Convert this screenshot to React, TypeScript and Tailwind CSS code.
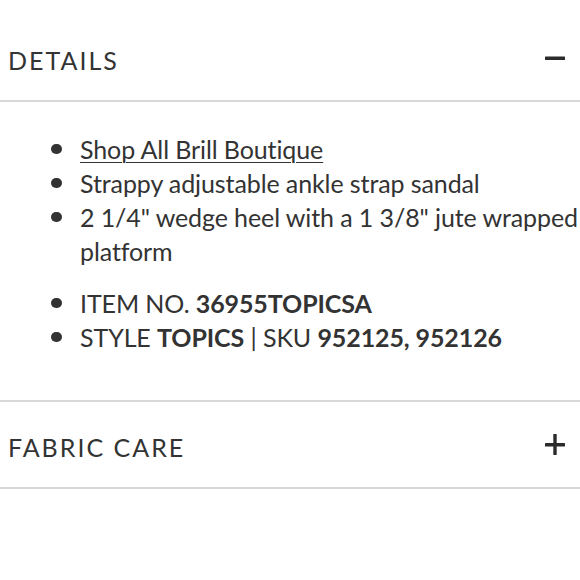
import React from 'react';

const Minus = () => (
  <svg width="20" height="20" viewBox="0 0 20 20" className="text-[#2b2b2b]">
    <rect x="0" y="8.5" width="20" height="3.4" rx="0.5" fill="currentColor" />
  </svg>
);

const Plus = () => (
  <svg width="20" height="21" viewBox="0 0 20 21" className="text-[#2b2b2b]">
    <rect x="0" y="9" width="20" height="3.4" rx="0.5" fill="currentColor" />
    <rect x="8.3" y="0" width="3.4" height="21" rx="0.5" fill="currentColor" />
  </svg>
);

const Bullet = ({ children }: { children: React.ReactNode }) => (
  <li className="flex">
    <span className="w-[80px] shrink-0 flex pl-[51px]">
      <span className="mt-[12px] w-[11px] h-[10px] rounded-full bg-[#333333]" />
    </span>
    <span className="max-w-[505px]">{children}</span>
  </li>
);

export default function App() {
  return (
    <div className="w-[580px] h-[580px] bg-white pt-[15px] text-[#333333] font-['Lato','Liberation_Sans',sans-serif] overflow-hidden">
      {/* Details */}
      <div className="flex items-center justify-between h-[87px] pl-[8px] pr-[15px] border-b-2 border-[#d8d8d8]">
        <span className="text-[25px] tracking-[0.08em] leading-none pt-[5px]">DETAILS</span>
        <Minus />
      </div>

      <div className="pt-[30px] pb-[46px] border-b-2 border-[#d8d8d8]">
        <ul className="text-[25px] tracking-[-0.1px] leading-[34px]">
          <Bullet>
            <a className="underline underline-offset-[3px] decoration-1">Shop All Brill Boutique</a>
          </Bullet>
          <Bullet>Strappy adjustable ankle strap sandal</Bullet>
          <Bullet>2 1/4" wedge heel with a 1 3/8" jute wrapped platform</Bullet>
        </ul>
        <ul className="text-[25px] tracking-[-0.1px] leading-[34px] mt-[18px]">
          <Bullet>
            ITEM NO. <span className="font-bold">36955TOPICSA</span>
          </Bullet>
          <Bullet>
            STYLE <span className="font-bold">TOPICS</span> | SKU <span className="font-bold">952125, 952126</span>
          </Bullet>
        </ul>
      </div>

      {/* Fabric care */}
      <div className="flex items-center justify-between h-[87px] pl-[8px] pr-[15px] border-b-2 border-[#d8d8d8]">
        <span className="text-[25px] tracking-[0.08em] leading-none pt-[5px]">FABRIC CARE</span>
        <Plus />
      </div>
    </div>
  );
}
